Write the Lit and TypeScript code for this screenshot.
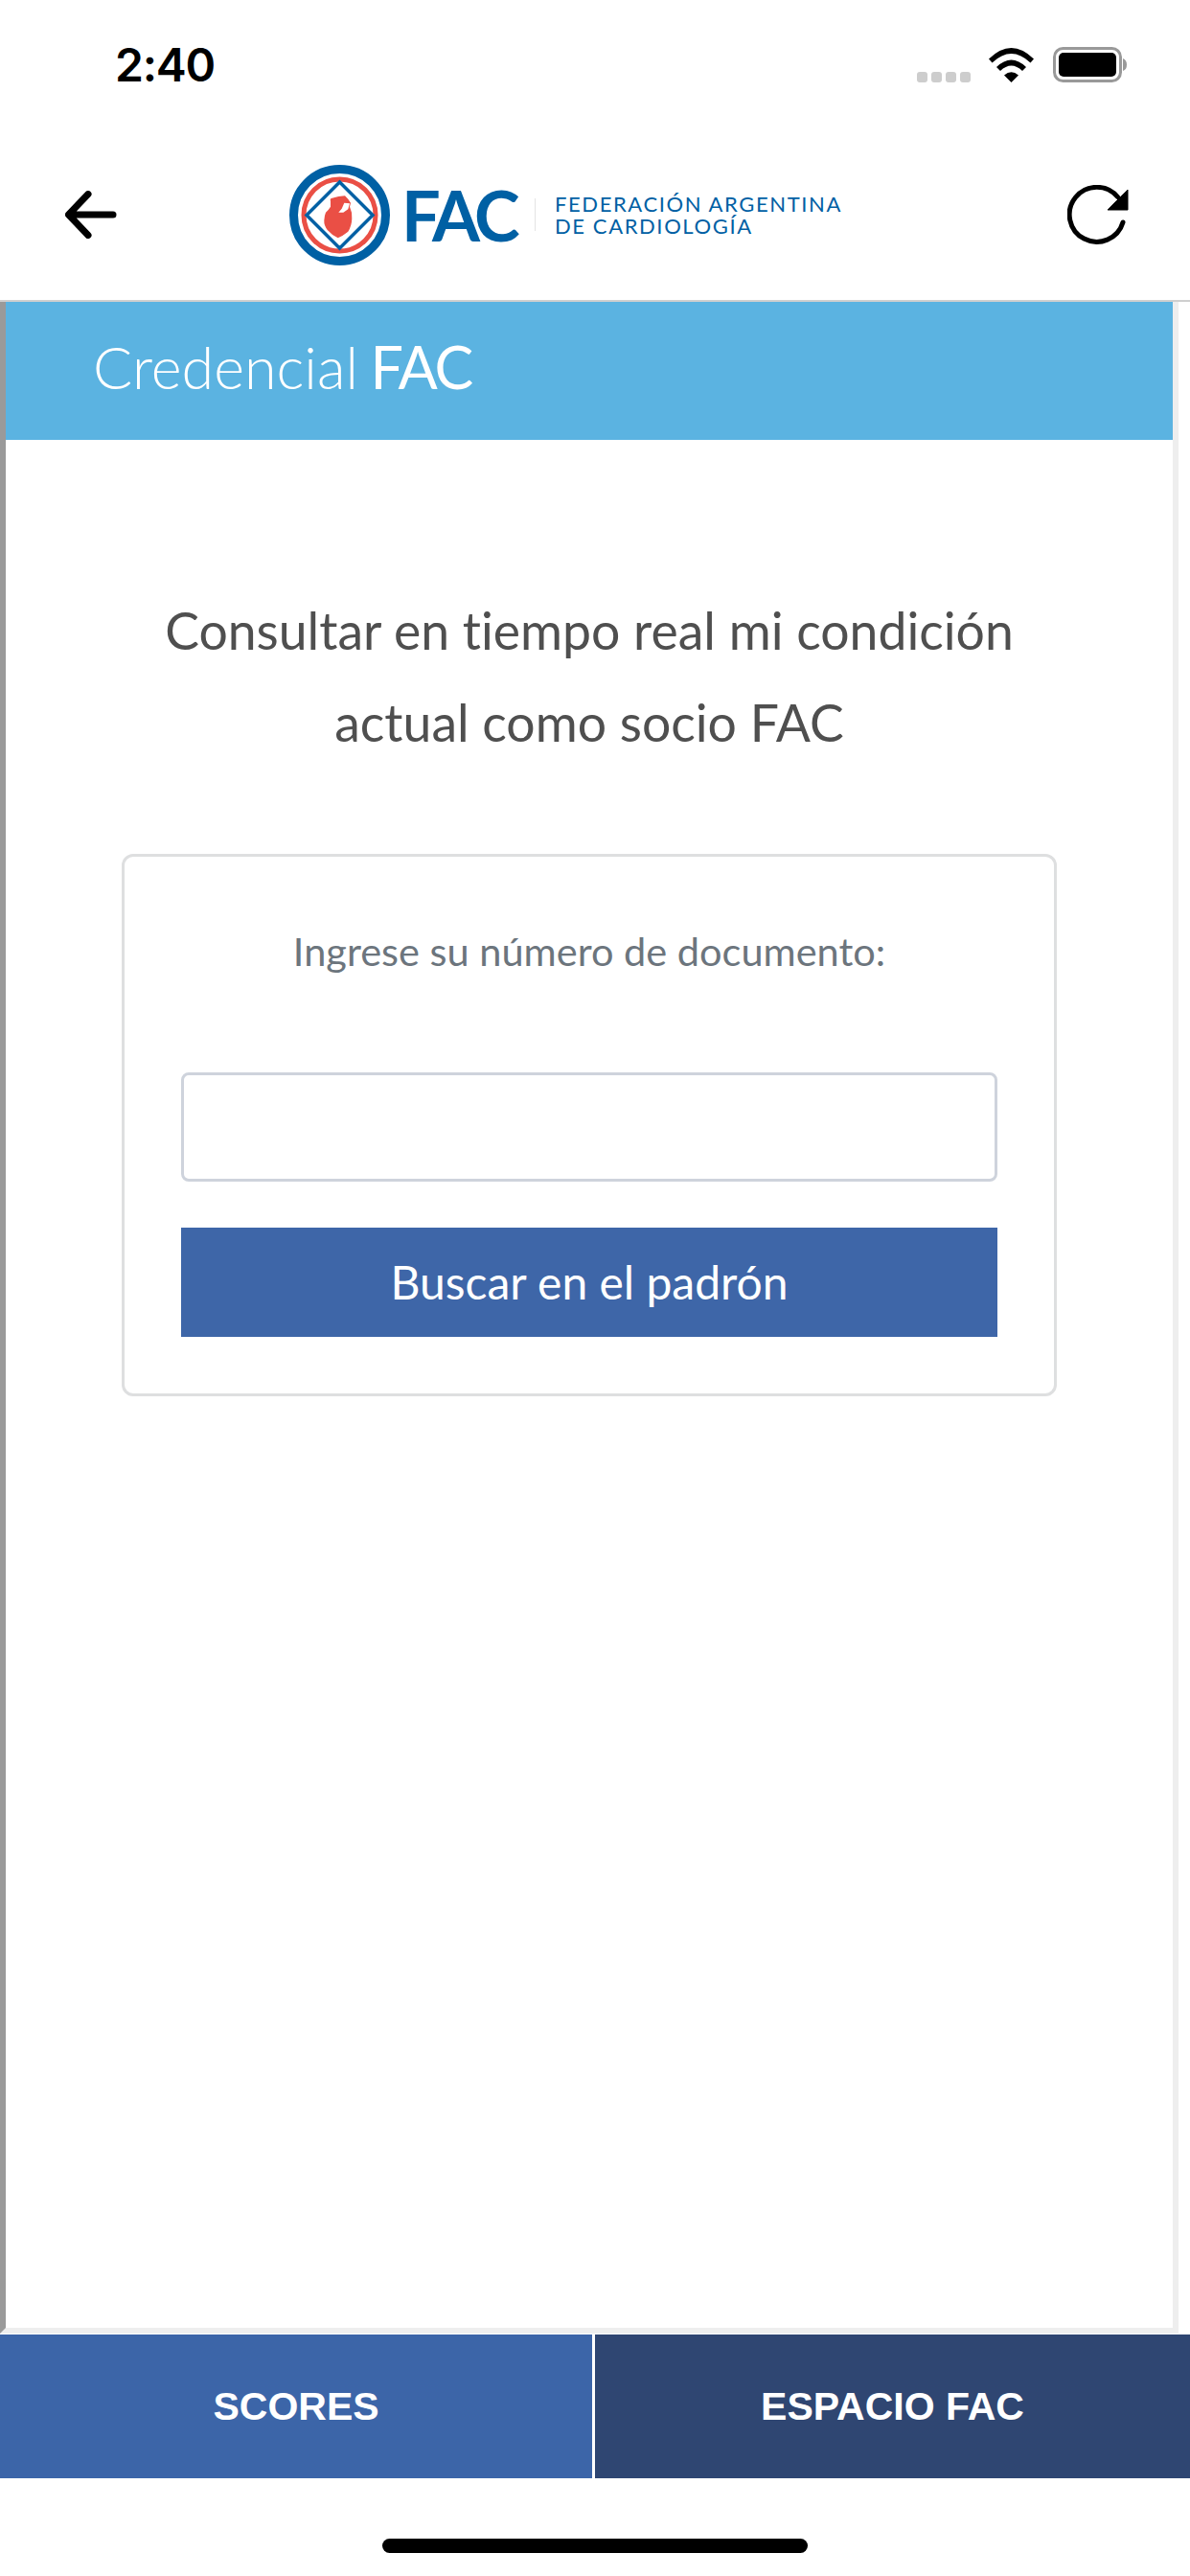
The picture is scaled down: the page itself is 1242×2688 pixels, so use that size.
import { LitElement, html, css, svg } from "lit";
import { customElement } from "lit/decorators.js";

@customElement("app-root")
export class AppRoot extends LitElement {
  static styles = css`
    :host { display: block; width: 1242px; height: 2688px; background: #fff; overflow: hidden; font-family: Lato, "Liberation Sans", sans-serif; }
    .page { display: flex; flex-direction: column; height: 2688px; }
    .status { height: 118px; flex: none; display: flex; align-items: flex-start; justify-content: space-between; box-sizing: border-box; padding: 42px 64px 0 120px; }
    .time { font: 600 48px/52px Inter, "Liberation Sans", sans-serif; color: #000; letter-spacing: -1.2px; }
    .sys { display: flex; align-items: flex-start; padding-top: 7px; }
    .nav { height: 197px; flex: none; display: flex; align-items: center; box-sizing: border-box; padding: 17px 64px 0 68px; border-bottom: 2px solid #cfcfcf; }
    .logo { display: flex; align-items: center; margin-left: 180px; margin-right: auto; }
    .fac { font: 700 72px/60px Lato, sans-serif; color: #0060a4; letter-spacing: -4.5px; margin-left: 12px; width: 126px; white-space: nowrap; }
    .sep { width: 1px; height: 34px; background: #e4e4e4; margin: 0 20px 0 13px; }
    .org { font: 400 22px/23.5px Lato, sans-serif; color: #0060a4; letter-spacing: 1.6px; white-space: nowrap; }
    .frame { flex: 1; min-height: 0; box-sizing: border-box; margin-right: 12px; border-style: solid; border-width: 0 6px 6px 6px; border-color: #9a9a9a #eeeeee #eeeeee #9a9a9a; display: flex; flex-direction: column; }
    .banner { height: 144px; flex: none; background: #5bb3e1; color: #fff; display: flex; align-items: center; box-sizing: border-box; padding: 0 0 8px 91px; font: 300 61px/60px Lato, sans-serif; white-space: pre; }
    .banner b { font-weight: 400; letter-spacing: -2px; margin-left: -4px; }
    .lead { margin: 0; padding-top: 150px; text-align: center; font: 400 53.500px/96px Lato, sans-serif; color: #4f4f4f; }
    .card { margin: 90px 121px 0 121px; box-sizing: border-box; border: 3px solid #dedfe0; border-radius: 12px; padding: 68px 59px 59px 59px; display: flex; flex-direction: column; }
    .hint { margin: 0; text-align: center; font: 400 41.500px/60px Lato, sans-serif; color: #6c757d; }
    .input { margin-top: 97px; height: 114px; box-sizing: border-box; border: 3px solid #ced3dc; border-radius: 8px; background: #fff; }
    .btn { margin-top: 48px; height: 114px; background: #3e66a8; color: #fff; display: flex; align-items: center; justify-content: center; font: 400 48px/60px Lato, sans-serif; }
    .tabs { height: 150px; flex: none; margin-top: 1px; display: grid; grid-template-columns: 618px 1fr; column-gap: 3px; font: 700 41px/48px "Liberation Sans", sans-serif; color: #fff; }
    .tab { display: flex; align-items: center; justify-content: center; }
    .tab.a { background: #3c65a8; }
    .tab.b { background: #2f4672; }
    .home { flex: none; height: 102px; display: flex; justify-content: center; box-sizing: border-box; padding-top: 63px; }
    .bar { width: 444px; height: 15px; background: #000; border-radius: 8px; }
    svg { display: block; flex: none; }
    .page * { font-variant-ligatures: none; }
  `;

  private statusIcons() {
    return html`<svg width="222" height="40" viewBox="0 0 222 40">
      <g fill="#cdcdcd">
        <rect x="1" y="26" width="11" height="11" rx="3"/><rect x="16" y="26" width="11" height="11" rx="3"/>
        <rect x="31" y="26" width="11" height="11" rx="3"/><rect x="46" y="26" width="11" height="11" rx="3"/>
      </g>
      <path fill="#000" d="M76 12.500Q99.500-10.500 123 12.500L119.500 16.500Q99.500-2.500 79.500 16.500Z"/>
      <path fill="#000" d="M84 21Q99.500 6 115 21L111 25Q99.500 14 88 25Z"/>
      <path fill="#000" d="M92 29.500Q99.500 23 107 29.500L99.500 37Z"/>
      <rect x="144.500" y="1.500" width="69" height="34" rx="9" fill="none" stroke="#999" stroke-width="3"/>
      <rect x="149" y="6" width="60" height="25" rx="5" fill="#000"/>
      <path d="M216 12v13q4-1.500 4-6.500t-4-6.500z" fill="#999"/>
    </svg>`;
  }

  private logoMark() {
    return svg`<svg width="105" height="105" viewBox="0 0 105 105">
      <circle cx="52.500" cy="52.500" r="48" fill="none" stroke="#0060a4" stroke-width="9"/>
      <circle cx="52.500" cy="52.500" r="37.500" fill="none" stroke="#ea4f45" stroke-width="5"/>
      <path d="M52.500 18L87 52.500 52.500 87 18 52.500Z" fill="#fff" stroke="#0060a4" stroke-width="3.500"/>
      <path fill="#ea4f45" d="M43 38Q42 35 44.700 34.700L51.300 33 58 32.300 61.300 35.700 64 39.700 63 43.700Q66 50 65.300 56.300 65 64 61.300 69.700 56 74 50.700 76.300 44 73 39.700 68 36 63 36.300 58 36.500 53 38 49.700 41 47 43 43.700Z"/>
      <path fill="#fff" d="M57.300 39.700L63 40.300 61.300 46.300 56.300 49.700 51.300 49.700 54.700 45.700Z"/>
    </svg>`;
  }

  render() {
    return html`<div class="page">
      <div class="status"><div class="time">2:40</div><div class="sys">${this.statusIcons()}</div></div>
      <div class="nav">
        <svg width="54" height="50" viewBox="0 0 54 50"><path d="M50 25H4M24 3.500L3.500 25 24 46.500" fill="none" stroke="#000" stroke-width="7" stroke-linecap="round" stroke-linejoin="round"/></svg>
        <div class="logo">
          ${this.logoMark()}
          <div class="fac">FAC</div>
          <div class="sep"></div>
          <div class="org">FEDERACIÓN ARGENTINA<br>DE CARDIOLOGÍA</div>
        </div>
        <svg width="64" height="62" viewBox="0 0 64 62"><path d="M52.500 12.500A28.500 28.500 0 1 0 58 39" fill="none" stroke="#000" stroke-width="5" stroke-linecap="round"/><path d="M63 5v21H42Z" fill="#000" stroke="#000" stroke-width="1" stroke-linejoin="round"/></svg>
      </div>
      <div class="frame">
        <div class="banner">Credencial <b>FAC</b></div>
        <p class="lead">Consultar en tiempo real mi condición<br>actual como socio FAC</p>
        <div class="card">
          <p class="hint">Ingrese su número de documento:</p>
          <div class="input"></div>
          <div class="btn">Buscar en el padrón</div>
        </div>
      </div>
      <div class="tabs"><div class="tab a">SCORES</div><div class="tab b">ESPACIO FAC</div></div>
      <div class="home"><div class="bar"></div></div>
    </div>`;
  }
}
